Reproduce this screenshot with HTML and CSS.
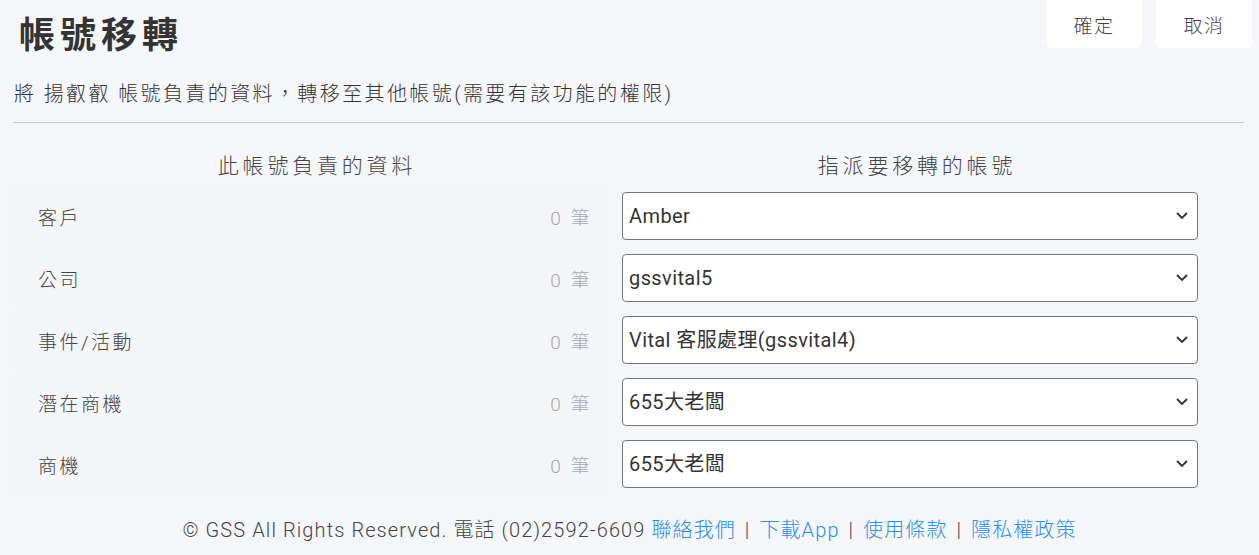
FILE: index.html
```html
<!DOCTYPE html>
<html lang="zh-Hant">
<head>
<meta charset="utf-8">
<title>帳號移轉</title>
<link rel="stylesheet" href="styles.css">
</head>
<body>
<div class="page">
  <header class="header">
    <h1 class="title">帳號移轉</h1>
    <div class="actions">
      <button class="btn">確定</button>
      <button class="btn">取消</button>
    </div>
  </header>
  <p class="desc">將 揚叡叡 帳號負責的資料，轉移至其他帳號(需要有該功能的權限)</p>
  <hr class="divider">
  <div class="grid">
    <div class="col-head col-left">此帳號負責的資料</div>
    <div class="col-head col-right">指派要移轉的帳號</div>

    <div class="item"><span class="label">客戶</span><span class="count">0 筆</span></div>
    <div class="field"><div class="select-wrap"><select class="select"><option>Amber</option></select><svg class="chev" viewBox="0 0 12 8" width="12" height="8"><polyline points="1,1 6,6 11,1" fill="none" stroke="#333" stroke-width="1.8"/></svg></div></div>

    <div class="item"><span class="label">公司</span><span class="count">0 筆</span></div>
    <div class="field"><div class="select-wrap"><select class="select"><option>gssvital5</option></select><svg class="chev" viewBox="0 0 12 8" width="12" height="8"><polyline points="1,1 6,6 11,1" fill="none" stroke="#333" stroke-width="1.8"/></svg></div></div>

    <div class="item"><span class="label">事件/活動</span><span class="count">0 筆</span></div>
    <div class="field"><div class="select-wrap"><select class="select"><option>Vital 客服處理(gssvital4)</option></select><svg class="chev" viewBox="0 0 12 8" width="12" height="8"><polyline points="1,1 6,6 11,1" fill="none" stroke="#333" stroke-width="1.8"/></svg></div></div>

    <div class="item"><span class="label">潛在商機</span><span class="count">0 筆</span></div>
    <div class="field"><div class="select-wrap"><select class="select"><option>655大老闆</option></select><svg class="chev" viewBox="0 0 12 8" width="12" height="8"><polyline points="1,1 6,6 11,1" fill="none" stroke="#333" stroke-width="1.8"/></svg></div></div>

    <div class="item"><span class="label">商機</span><span class="count">0 筆</span></div>
    <div class="field"><div class="select-wrap"><select class="select"><option>655大老闆</option></select><svg class="chev" viewBox="0 0 12 8" width="12" height="8"><polyline points="1,1 6,6 11,1" fill="none" stroke="#333" stroke-width="1.8"/></svg></div></div>
  </div>
  <footer class="footer">© GSS All Rights Reserved. 電話 (02)2592-6609 <a class="link">聯絡我們</a><span class="sep">|</span><a class="link">下載App</a><span class="sep">|</span><a class="link">使用條款</a><span class="sep">|</span><a class="link">隱私權政策</a></footer>
</div>
</body>
</html>
```

FILE: styles.css
```css
html, body {
  margin: 0;
  padding: 0;
  background: #f5f6fa;
}
body {
  font-family: Roboto, "Noto Sans CJK TC", sans-serif;
  color: #444;
  width: 1259px;
  height: 555px;
  overflow: hidden;
}
.page {
  padding: 0 7px 0 13px;
}
.header {
  display: flex;
  justify-content: space-between;
  align-items: flex-start;
  height: 60px;
}
.title {
  margin: 12px 0 0 6px;
  font-size: 36px;
  line-height: 48px;
  font-weight: 700;
  color: #333;
  letter-spacing: 5px;
}
.actions {
  display: flex;
  gap: 14px;
}
.btn {
  width: 96px;
  height: 48px;
  border: none;
  background: #fff;
  border-radius: 0 0 6px 6px;
  font-family: inherit;
  font-size: 19px;
  color: #444;
  letter-spacing: 1.5px;
  font-weight: 300;
}
.desc {
  margin: 19px 0 0 1px;
  font-size: 20px;
  line-height: 30px;
  letter-spacing: 2.4px;
  font-weight: 300;
  color: #333;
}
.divider {
  margin: 13px 8px 0 0;
  border: none;
  border-top: 1px solid #c8c8c8;
  height: 0;
}
.grid {
  display: grid;
  grid-template-columns: 596px 586px;
  column-gap: 13px;
  row-gap: 6px;
  margin-top: 28px;
}
.col-head {
  text-align: center;
  font-size: 21px;
  line-height: 30px;
  letter-spacing: 3.8px;
  font-weight: 300;
  color: #444;
  margin-bottom: 1px;
}
.col-left {
  padding-left: 12px;
}
.col-right {
  padding-left: 4px;
}
.item {
  display: flex;
  justify-content: space-between;
  align-items: center;
  height: 56px;
  background: #f4f5f7;
  padding: 0 17px 0 25px;
  font-size: 19px;
  font-weight: 300;
  letter-spacing: 2.5px;
}
.label {
  color: #444;
}
.count {
  color: #aaa;
}
.field {
  display: flex;
  align-items: center;
}
.select-wrap {
  position: relative;
  width: 576px;
}
.select {
  appearance: none;
  -webkit-appearance: none;
  width: 576px;
  height: 48px;
  border: 1px solid #767676;
  border-radius: 4px;
  background: #fff;
  padding: 0 30px 0 6px;
  font-family: inherit;
  font-size: 20px;
  letter-spacing: 0.4px;
  color: #333;
}
.chev {
  position: absolute;
  right: 10px;
  top: 20px;
  pointer-events: none;
}
.footer {
  margin-top: 23px;
  margin-left: -13px;
  margin-right: -7px;
  text-align: center;
  font-size: 20px;
  line-height: 30px;
  color: #444;
  font-weight: 300;
  letter-spacing: 1.1px;
}
.sep {
  margin: 0 9px;
}
.link {
  color: #2b8fe8;
  text-decoration: none;
}
```
